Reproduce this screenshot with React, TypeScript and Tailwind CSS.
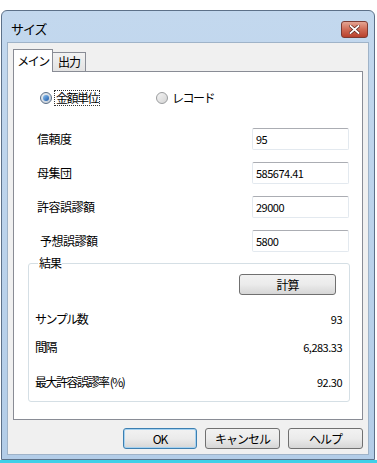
import React from 'react';

const font = { fontFamily: '"Noto Sans CJK JP", "Noto Sans", sans-serif' };

function Radio({ checked, label, focus }: { checked?: boolean; label: string; focus?: boolean }) {
  return (
    <div className="flex items-center gap-[3px]">
      <div
        className={
          'flex h-[12px] w-[12px] items-center justify-center rounded-full border ' +
          (checked
            ? 'border-[#5a6e86] bg-gradient-to-br from-[#e9eef3] to-[#c3ccd6]'
            : 'border-[#9a9c9e] bg-gradient-to-br from-[#f4f4f4] to-[#d4d4d4]')
        }
      >
        {checked && (
          <div className="h-[6px] w-[6px] rounded-full bg-gradient-to-br from-[#8cc3f2] to-[#1d5aa8]" />
        )}
      </div>
      <span
        className={
          'px-[1px] text-[12px] leading-[14px] tracking-[-1.5px] ' +
          (focus ? 'outline outline-1 outline-dotted outline-[#333]' : '')
        }
      >
        {label}
      </span>
    </div>
  );
}

function Field({ label, value, indent }: { label: string; value: string; indent?: boolean }) {
  return (
    <div className="flex h-[22px] items-center justify-between">
      <span className={'text-[12px] tracking-[-0.5px] ' + (indent ? 'pl-[3px]' : '')}>{label}</span>
      <div className="flex h-[22px] w-[97px] items-center rounded-[2px] border border-[#e3e9ef] border-t-[#abadb3] bg-white px-[3px] text-[11px] tracking-[-0.5px]">
        {value}
      </div>
    </div>
  );
}

function Btn({ children, primary, w }: { children: React.ReactNode; primary?: boolean; w: string }) {
  return (
    <button
      className={
        'flex h-[21px] items-center justify-center rounded-[3px] border bg-gradient-to-b from-[#f2f2f2] via-[#ebebeb] to-[#d6d6d6] text-[12px] tracking-[-1px] ' +
        (primary ? 'border-[#3c7fb1] shadow-[inset_0_0_0_1px_#a6d2f0]' : 'border-[#707070]') +
        ' ' +
        w
      }
    >
      {children}
    </button>
  );
}

function Row({ label, value, className }: { label: string; value: string; className?: string }) {
  return (
    <div className={'flex items-center justify-between text-[12px] leading-[16px] ' + (className ?? '')}>
      <span className="tracking-[-1.5px]">{label}</span>
      <span className="text-[11px] tracking-[-0.5px]">{value}</span>
    </div>
  );
}

export default function App() {
  return (
    <div className="flex h-[463px] w-[377px] flex-col bg-white text-black" style={font}>
      <div className="ml-[1px] mt-[10px] flex h-[450px] w-[374px] flex-col rounded-t-[6px] border border-[#5d7189] bg-gradient-to-b from-[#c3d8ee] to-[#b3cde8]">
        {/* title bar */}
        <div className="flex h-[31px] shrink-0 items-start justify-between pl-[9px] pr-[6px]">
          <span className="mt-[11px] text-[13px] leading-[14px] tracking-[-1px]">サイズ</span>
          <div className="mt-[10px] flex h-[17px] w-[27px] items-center justify-center rounded-[3px] border border-[#7d3b33] bg-gradient-to-b from-[#e4a493] via-[#cf6a55] to-[#b8402c]">
            <svg width="11" height="9" viewBox="0 0 11 9">
              <path d="M1.5 1 L9.5 8 M9.5 1 L1.5 8" stroke="#5a2219" strokeWidth="3.2" strokeLinecap="square" />
              <path d="M1.5 1 L9.5 8 M9.5 1 L1.5 8" stroke="#ffffff" strokeWidth="1.8" strokeLinecap="square" />
            </svg>
          </div>
        </div>

        {/* client area */}
        <div className="mx-[5px] flex h-[413px] flex-col border border-[#9fb3c8] bg-[#f0f0f0] px-[5px] pt-[5px]">
          {/* tabs */}
          <div className="flex h-[23px] items-end">
            <div className="relative z-10 -mb-[1px] flex h-[23px] w-[40px] items-start justify-center border border-b-0 border-[#898c95] bg-white pt-[2px] text-[12px] tracking-[-1.5px]">
              メイン
            </div>
            <div className="flex h-[19px] w-[33px] items-center justify-center border border-b-0 border-l-0 border-[#898c95] bg-gradient-to-b from-[#f2f2f2] to-[#e3e3e3] text-[12px] tracking-[-1px]">
              出力
            </div>
          </div>

          {/* panel */}
          <div className="flex h-[349px] w-[350px] flex-col border border-[#898c95] bg-white">
            <div className="ml-[26px] mt-[19px] flex gap-[57px]">
              <Radio checked label="金額単位" focus />
              <Radio label="レコード" />
            </div>

            <div className="ml-[23px] mr-[13px] mt-[23px] flex flex-col gap-[12px]">
              <Field label="信頼度" value="95" />
              <Field label="母集団" value="585674.41" />
              <Field label="許容誤謬額" value="29000" />
              <Field label="予想誤謬額" value="5800" indent />
            </div>

            <fieldset className="ml-[14px] mt-[4px] h-[146px] w-[322px] rounded-[3px] border border-[#d5dfe5] px-[6px]">
              <legend className="ml-[3px] px-[1px] text-[12px] leading-[14px] tracking-[-1px]">結果</legend>
              <div className="flex justify-end pr-[7px] pt-[4px]">
                <Btn w="w-[97px] h-[20px]">計算</Btn>
              </div>
              <div className="mt-[16px] flex flex-col pr-[1px]">
                <Row label="サンプル数" value="93" />
                <Row label="間隔" value="6,283.33" className="mt-[12px]" />
                <Row label="最大許容誤謬率 (%)" value="92.30" className="mt-[19px]" />
              </div>
            </fieldset>
          </div>

          {/* bottom buttons */}
          <div className="mt-[8px] flex justify-end gap-[8px]">
            <Btn primary w="w-[74px]">OK</Btn>
            <Btn w="w-[75px]">キャンセル</Btn>
            <Btn w="w-[75px]">ヘルプ</Btn>
          </div>
        </div>
      </div>
      <div className="mt-auto h-[3px] bg-[#3fd0e8]" />
    </div>
  );
}
